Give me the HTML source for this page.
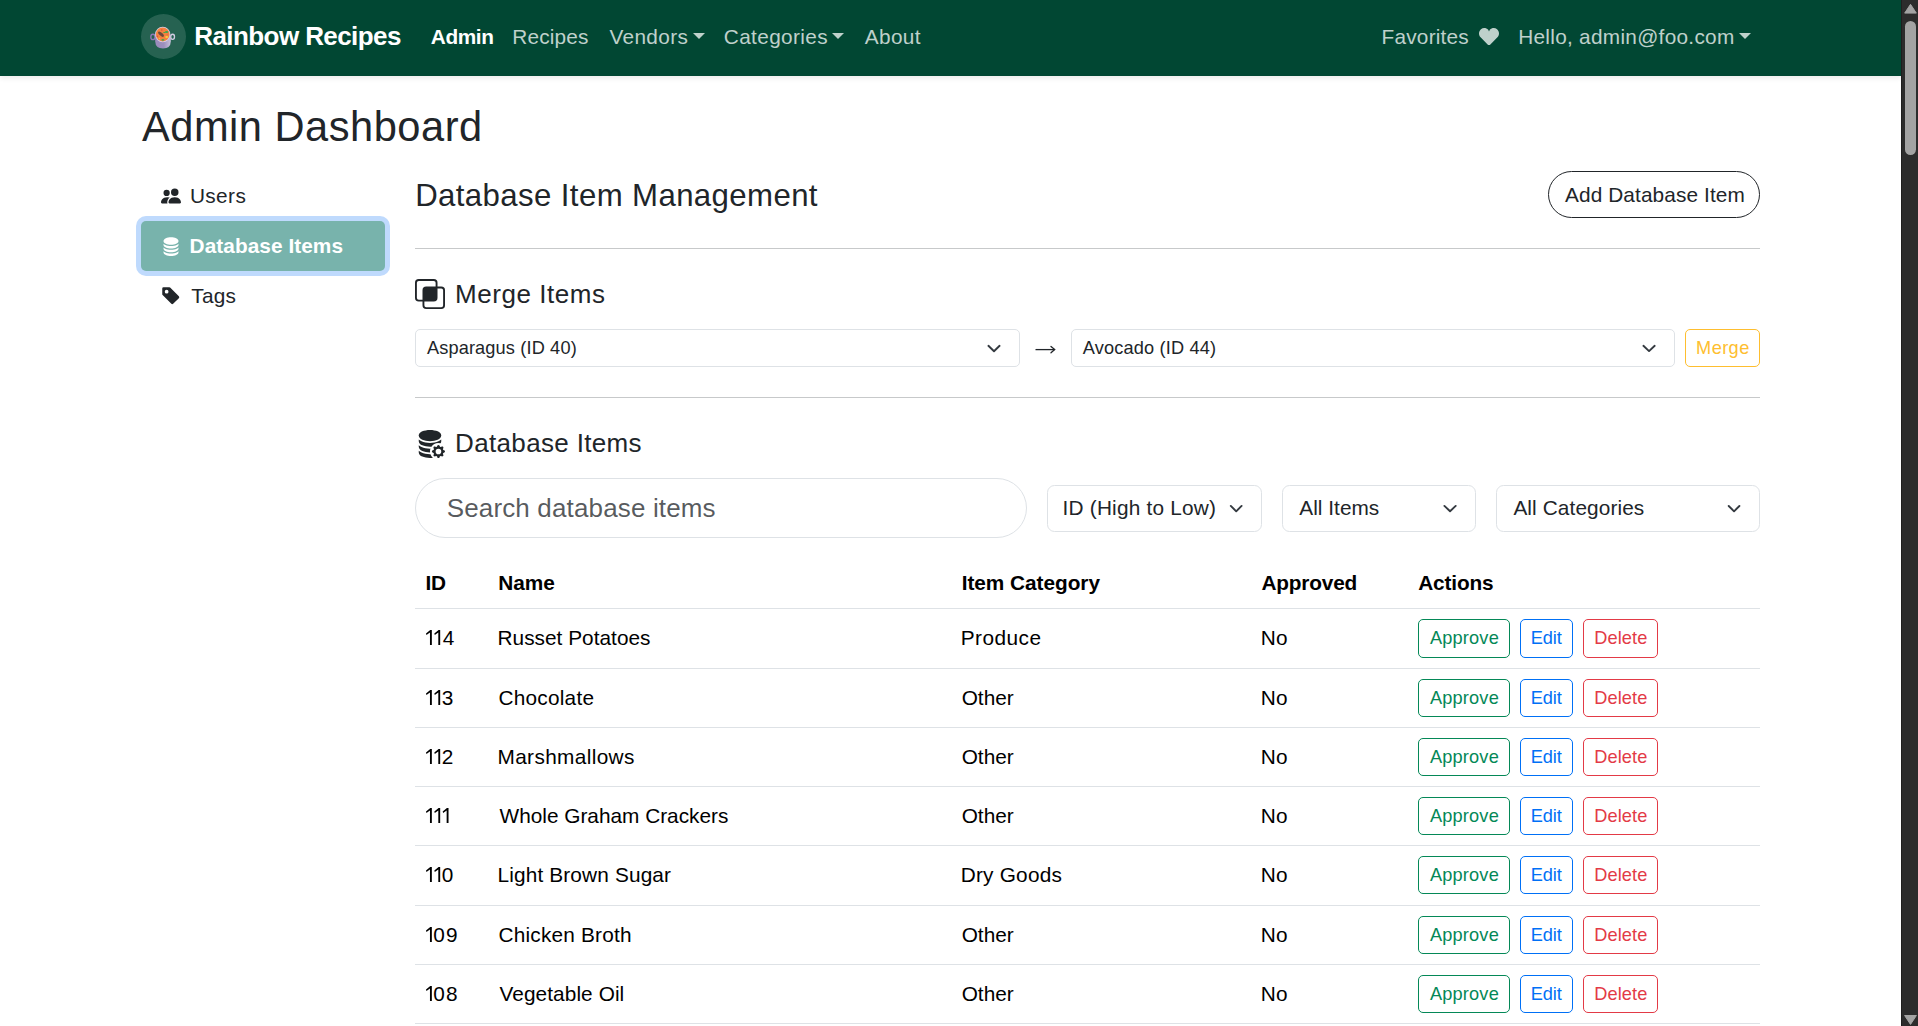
<!DOCTYPE html>
<html><head><meta charset="utf-8"><title>Admin Dashboard - Rainbow Recipes</title>
<style>
html,body{margin:0;padding:0;}
body{width:1918px;height:1026px;overflow:hidden;position:relative;background:#fff;font-family:"Liberation Sans",sans-serif;}
.t{position:absolute;white-space:pre;line-height:1;}
.a{position:absolute;box-sizing:border-box;}
</style></head><body>
<div class="a" style="left:0px;top:0px;width:1901px;height:76px;background:#014733;box-shadow:0 2.5px 5px rgba(0,0,0,.075)"></div>
<div class="a" style="left:141px;top:14px;width:45px;height:45px;border-radius:50%;background:rgba(255,255,255,.15)"></div>
<svg class="a" style="left:141px;top:14px" width="45" height="45" viewBox="0 0 45 45">
<defs><linearGradient id="pg" x1="0" x2="1" y1="0" y2="0"><stop offset="0" stop-color="#9a8abb"/><stop offset=".55" stop-color="#9c8fbd"/><stop offset="1" stop-color="#c9c1da"/></linearGradient></defs>
<ellipse cx="11.9" cy="22.9" rx="2.1" ry="2.7" fill="none" stroke="#8f79b6" stroke-width="1.35"/>
<ellipse cx="31.6" cy="22.8" rx="1.9" ry="2.6" fill="none" stroke="#d3cce3" stroke-width="1.35"/>
<path d="M14.2 21 L14.2 27.5 Q14.5 34.5 22 34.5 Q29.6 34.5 29.8 27.5 L29.8 21 Z" fill="url(#pg)"/>
<ellipse cx="21.7" cy="20.5" rx="7.6" ry="7.8" fill="#d6d0e6"/>
<ellipse cx="21.7" cy="20.4" rx="6.8" ry="7.0" fill="#f4813f"/>
<ellipse cx="20.0" cy="20.2" rx="3.6" ry="1.55" transform="rotate(42 20.0 20.2)" fill="#6e4a3a"/>
<ellipse cx="25.6" cy="18.0" rx="1.7" ry="1.1" fill="#3fa84e"/><ellipse cx="23.3" cy="18.4" rx="1.2" ry=".5" fill="#3fa84e"/>
<ellipse cx="21.9" cy="25.8" rx="1.5" ry="0.9" fill="#3fa84e"/>
<ellipse cx="25.7" cy="23.0" rx="1.5" ry="0.95" fill="#f7d33b"/><circle cx="18.5" cy="24.5" r="0.75" fill="#f2c23a"/>
<circle cx="20.8" cy="16.0" r="0.8" fill="#e0503a"/><circle cx="16.4" cy="22.2" r="0.7" fill="#e0503a"/><circle cx="26.3" cy="20.5" r="0.85" fill="#ee6a45"/>
</svg>
<div class="a" style="left:693.1px;top:32.8px;width:0;height:0;border-left:6px solid transparent;border-right:6px solid transparent;border-top:6px solid rgba(255,255,255,.75)"></div>
<div class="a" style="left:831.8px;top:32.8px;width:0;height:0;border-left:6px solid transparent;border-right:6px solid transparent;border-top:6px solid rgba(255,255,255,.75)"></div>
<div class="a" style="left:1739.4px;top:32.8px;width:0;height:0;border-left:6px solid transparent;border-right:6px solid transparent;border-top:6px solid rgba(255,255,255,.75)"></div>
<svg class="a" style="left:1479px;top:28px" width="20" height="17.4" viewBox="0 30 512 450" preserveAspectRatio="none"><path fill="rgba(255,255,255,.75)" d="M462.3 62.6C407.5 15.9 326 24.3 275.7 76.2L256 122L236.3 76.2C186.1 24.3 104.5 15.9 49.7 62.6c-62.8 53.6-66.1 149.8-9.9 207.9l193.5 199.8c12.5 12.9 32.8 12.9 45.3 0l193.5-199.8c56.3-58.1 53-154.3-9.8-207.9z"/></svg>
<div class="a" style="left:136px;top:216px;width:254px;height:60px;border-radius:10px;background:#bfdafd"></div>
<div class="a" style="left:141px;top:221px;width:244px;height:50px;border-radius:5px;background:#78b3ac"></div>
<svg class="a" style="left:161px;top:185.7px" width="20" height="20" viewBox="0 0 16 16"><path fill="#212529" d="M7 14s-1 0-1-1 1-4 5-4 5 3 5 4-1 1-1 1zm4-6a3 3 0 1 0 0-6 3 3 0 0 0 0 6m-5.784 6A2.24 2.24 0 0 1 5 13c0-1.355.68-2.75 1.936-3.72A6.3 6.3 0 0 0 5 9c-4 0-5 3-5 4s1 1 1 1zM4.5 8a2.5 2.5 0 1 0 0-5 2.5 2.5 0 0 0 0 5"/></svg>
<svg class="a" style="left:160.6px;top:235.75px" width="20" height="20" viewBox="0 0 16 16"><g fill="#fff"><path d="M3.904 1.777C4.978 1.289 6.427 1 8 1s3.022.289 4.096.777C13.125 2.245 14 2.993 14 4s-.875 1.755-1.904 2.223C11.022 6.711 9.573 7 8 7s-3.022-.289-4.096-.777C2.875 5.755 2 5.007 2 4s.875-1.755 1.904-2.223"/><path d="M2 6.161V7c0 1.007.875 1.755 1.904 2.223C4.978 9.71 6.427 10 8 10s3.022-.289 4.096-.777C13.125 8.755 14 8.007 14 7v-.839c-.457.432-1.004.751-1.49.972C11.278 7.693 9.682 8 8 8s-3.278-.307-4.51-.867c-.486-.22-1.033-.54-1.49-.972"/><path d="M2 9.161V10c0 1.007.875 1.755 1.904 2.223C4.978 12.711 6.427 13 8 13s3.022-.289 4.096-.777C13.125 11.755 14 11.007 14 10v-.839c-.457.432-1.004.751-1.49.972-1.232.56-2.828.867-4.51.867s-3.278-.307-4.51-.867c-.486-.22-1.033-.54-1.49-.972"/><path d="M2 12.161V13c0 1.007.875 1.755 1.904 2.223C4.978 15.711 6.427 16 8 16s3.022-.289 4.096-.777C13.125 14.755 14 14.007 14 13v-.839c-.457.432-1.004.751-1.49.972-1.232.56-2.828.867-4.51.867s-3.278-.307-4.51-.867c-.486-.22-1.033-.54-1.49-.972"/></g></svg>
<svg class="a" style="left:160.75px;top:285.75px" width="20" height="20" viewBox="0 0 16 16"><path fill="#212529" d="M2 1a1 1 0 0 0-1 1v4.586a1 1 0 0 0 .293.707l7 7a1 1 0 0 0 1.414 0l4.586-4.586a1 1 0 0 0 0-1.414l-7-7A1 1 0 0 0 6.586 1zm4 3.5a1.5 1.5 0 1 1-3 0 1.5 1.5 0 0 1 3 0"/></svg>
<div class="a" style="left:1548px;top:171px;width:212px;height:47px;border:1px solid #212529;border-radius:23.5px"></div>
<div class="a" style="left:415px;top:248px;width:1345px;height:1px;background:#c7c9ca"></div>
<svg class="a" style="left:415px;top:279px" width="30" height="30" viewBox="0 0 16 16"><path fill="#212529" d="M0 2a2 2 0 0 1 2-2h8a2 2 0 0 1 2 2v2h2a2 2 0 0 1 2 2v8a2 2 0 0 1-2 2H6a2 2 0 0 1-2-2v-2H2a2 2 0 0 1-2-2zm5 10v2a1 1 0 0 0 1 1h8a1 1 0 0 0 1-1V6a1 1 0 0 0-1-1h-2v5a2 2 0 0 1-2 2zm6-8V2a1 1 0 0 0-1-1H2a1 1 0 0 0-1 1v8a1 1 0 0 0 1 1h2V6a2 2 0 0 1 2-2z"/></svg>
<div class="a" style="left:415px;top:329px;width:605px;height:38px;border:1px solid #dee2e6;border-radius:5px"></div>
<div class="a" style="left:1071px;top:329px;width:604px;height:38px;border:1px solid #dee2e6;border-radius:5px"></div>
<div class="a" style="left:1685px;top:329px;width:75px;height:38px;border:1px solid #febe2f;border-radius:5px"></div>
<svg class="a" style="left:1030px;top:340px" width="30" height="20" viewBox="0 0 30 20"><path d="M5.5 9.6 H24.6" stroke="#212529" stroke-width="1.3" fill="none"/><path d="M21.0 6.5 L24.7 9.6 L21.0 12.8" stroke="#212529" stroke-width="1.3" fill="none" stroke-linejoin="miter" stroke-linecap="round"/></svg>
<div class="a" style="left:415px;top:397px;width:1345px;height:1px;background:#c7c9ca"></div>
<svg class="a" style="left:415.2px;top:427.9px" width="30" height="30" viewBox="0 0 16 16"><g fill="#212529"><path d="M8 1c-1.573 0-3.022.289-4.096.777C2.875 2.245 2 2.993 2 4s.875 1.755 1.904 2.223C4.978 6.711 6.427 7 8 7s3.022-.289 4.096-.777C13.125 5.755 14 5.007 14 4s-.875-1.755-1.904-2.223C11.022 1.289 9.573 1 8 1"/><path d="M2 7v-.839c.457.432 1.004.751 1.49.972C4.722 7.693 6.318 8 8 8s3.278-.307 4.51-.867c.486-.22 1.033-.54 1.49-.972V7c0 .424-.155.802-.411 1.133a4.51 4.51 0 0 0-4.815 1.843A12 12 0 0 1 8 10c-1.573 0-3.022-.289-4.096-.777C2.875 8.755 2 8.007 2 7m6.257 3.998L8 11c-1.682 0-3.278-.307-4.51-.867-.486-.22-1.033-.54-1.49-.972V10c0 1.007.875 1.755 1.904 2.223C4.978 12.711 6.427 13 8 13h.027a4.55 4.55 0 0 1 .23-2.002m-.002 3L8 14c-1.682 0-3.278-.307-4.51-.867-.486-.22-1.033-.54-1.49-.972V13c0 1.007.875 1.755 1.904 2.223C4.978 15.711 6.427 16 8 16c.536 0 1.058-.034 1.555-.097a4.5 4.5 0 0 1-1.3-1.905"/><path d="M11.886 9.46c.18-.613 1.048-.613 1.229 0l.043.148a.64.64 0 0 0 .921.382l.136-.074c.561-.306 1.175.308.87.869l-.075.136a.64.64 0 0 0 .382.92l.149.045c.612.18.612 1.048 0 1.229l-.15.043a.64.64 0 0 0-.38.921l.074.136c.305.561-.309 1.175-.87.87l-.136-.075a.64.64 0 0 0-.92.382l-.045.149c-.18.612-1.048.612-1.229 0l-.043-.15a.64.64 0 0 0-.921-.38l-.136.074c-.561.305-1.175-.309-.87-.87l.075-.136a.64.64 0 0 0-.382-.92l-.148-.045c-.613-.18-.613-1.048 0-1.229l.148-.043a.64.64 0 0 0 .382-.921l-.074-.136c-.306-.561.308-1.175.869-.87l.136.075a.64.64 0 0 0 .92-.382zM14 12.5a1.5 1.5 0 1 0-3 0 1.5 1.5 0 0 0 3 0"/></g></svg>
<div class="a" style="left:415px;top:478px;width:612px;height:60px;border:1px solid #dee2e6;border-radius:30px"></div>
<div class="a" style="left:1047px;top:485px;width:215px;height:47px;border:1px solid #dee2e6;border-radius:7.5px"></div>
<div class="a" style="left:1282px;top:485px;width:194px;height:47px;border:1px solid #dee2e6;border-radius:7.5px"></div>
<div class="a" style="left:1496px;top:485px;width:264px;height:47px;border:1px solid #dee2e6;border-radius:7.5px"></div>
<svg class="a" style="left:0;top:0" width="1918" height="1026"><g fill="none" stroke="#343a40" stroke-width="1.9" stroke-linecap="round" stroke-linejoin="round"><path d="M988.4 345.8 L994.0 351.2 L999.6 345.8"/><path d="M1643.4 345.8 L1649.0500000000002 351.1 L1654.7 345.8"/><path d="M1230.8 505.9 L1236.1999999999998 511.3 L1241.6 505.9"/><path d="M1444.4 505.9 L1450.0500000000002 511.2 L1455.7 505.9"/><path d="M1728.7 506 L1734.0500000000002 511.3 L1739.4 506"/></g></svg>
<div class="a" style="left:415px;top:608px;width:1345px;height:1px;background:#dee2e6"></div>
<div class="a" style="left:415px;top:668px;width:1345px;height:1px;background:#dee2e6"></div>
<div class="a" style="left:415px;top:727px;width:1345px;height:1px;background:#dee2e6"></div>
<div class="a" style="left:415px;top:786px;width:1345px;height:1px;background:#dee2e6"></div>
<div class="a" style="left:415px;top:845px;width:1345px;height:1px;background:#dee2e6"></div>
<div class="a" style="left:415px;top:905px;width:1345px;height:1px;background:#dee2e6"></div>
<div class="a" style="left:415px;top:964px;width:1345px;height:1px;background:#dee2e6"></div>
<div class="a" style="left:415px;top:1023px;width:1345px;height:1px;background:#dee2e6"></div>
<div class="a" style="left:1418px;top:619px;width:92px;height:39px;border:1px solid #048857;border-radius:5px"></div>
<div class="a" style="left:1520px;top:619px;width:53px;height:39px;border:1px solid #0070f6;border-radius:5px"></div>
<div class="a" style="left:1583px;top:619px;width:75px;height:39px;border:1px solid #e33a46;border-radius:5px"></div>
<div class="a" style="left:1418px;top:679px;width:92px;height:38px;border:1px solid #048857;border-radius:5px"></div>
<div class="a" style="left:1520px;top:679px;width:53px;height:38px;border:1px solid #0070f6;border-radius:5px"></div>
<div class="a" style="left:1583px;top:679px;width:75px;height:38px;border:1px solid #e33a46;border-radius:5px"></div>
<div class="a" style="left:1418px;top:738px;width:92px;height:38px;border:1px solid #048857;border-radius:5px"></div>
<div class="a" style="left:1520px;top:738px;width:53px;height:38px;border:1px solid #0070f6;border-radius:5px"></div>
<div class="a" style="left:1583px;top:738px;width:75px;height:38px;border:1px solid #e33a46;border-radius:5px"></div>
<div class="a" style="left:1418px;top:797px;width:92px;height:38px;border:1px solid #048857;border-radius:5px"></div>
<div class="a" style="left:1520px;top:797px;width:53px;height:38px;border:1px solid #0070f6;border-radius:5px"></div>
<div class="a" style="left:1583px;top:797px;width:75px;height:38px;border:1px solid #e33a46;border-radius:5px"></div>
<div class="a" style="left:1418px;top:856px;width:92px;height:38px;border:1px solid #048857;border-radius:5px"></div>
<div class="a" style="left:1520px;top:856px;width:53px;height:38px;border:1px solid #0070f6;border-radius:5px"></div>
<div class="a" style="left:1583px;top:856px;width:75px;height:38px;border:1px solid #e33a46;border-radius:5px"></div>
<div class="a" style="left:1418px;top:916px;width:92px;height:38px;border:1px solid #048857;border-radius:5px"></div>
<div class="a" style="left:1520px;top:916px;width:53px;height:38px;border:1px solid #0070f6;border-radius:5px"></div>
<div class="a" style="left:1583px;top:916px;width:75px;height:38px;border:1px solid #e33a46;border-radius:5px"></div>
<div class="a" style="left:1418px;top:975px;width:92px;height:38px;border:1px solid #048857;border-radius:5px"></div>
<div class="a" style="left:1520px;top:975px;width:53px;height:38px;border:1px solid #0070f6;border-radius:5px"></div>
<div class="a" style="left:1583px;top:975px;width:75px;height:38px;border:1px solid #e33a46;border-radius:5px"></div>
<div class="a" style="left:1901px;top:0px;width:17px;height:1026px;background:#2c2c2c;border-left:1px solid #1f1f1f"></div>
<div class="a" style="left:1905px;top:21px;width:11px;height:134px;background:#a3a3a3;border-radius:5.5px"></div>
<svg class="a" style="left:1901px;top:0" width="17" height="1026"><path d="M9.5 4.3 L15.3 13.1 L3.7 13.1 Z" fill="#a3a3a3" stroke="#a3a3a3" stroke-width="1" stroke-linejoin="round"/><path d="M3.6 1015.5 L15.4 1015.5 L9.5 1024.4 Z" fill="#a3a3a3" stroke="#a3a3a3" stroke-width="1" stroke-linejoin="round"/></svg>
<svg class="a" style="left:0;top:0" width="1918" height="1026"><g fill="#000"><path transform="translate(426.00 645.00)" d="M0 -11.4 L4.25 -14.9 L5.84 -14.9 L5.84 0 L3.97 0 L3.97 -12.5 L0.45 -10.1 Z"/><path transform="translate(434.34 645.00)" d="M0 -11.4 L4.25 -14.9 L5.84 -14.9 L5.84 0 L3.97 0 L3.97 -12.5 L0.45 -10.1 Z"/><path transform="translate(426.00 705.00)" d="M0 -11.4 L4.25 -14.9 L5.84 -14.9 L5.84 0 L3.97 0 L3.97 -12.5 L0.45 -10.1 Z"/><path transform="translate(434.34 705.00)" d="M0 -11.4 L4.25 -14.9 L5.84 -14.9 L5.84 0 L3.97 0 L3.97 -12.5 L0.45 -10.1 Z"/><path transform="translate(426.00 764.00)" d="M0 -11.4 L4.25 -14.9 L5.84 -14.9 L5.84 0 L3.97 0 L3.97 -12.5 L0.45 -10.1 Z"/><path transform="translate(434.34 764.00)" d="M0 -11.4 L4.25 -14.9 L5.84 -14.9 L5.84 0 L3.97 0 L3.97 -12.5 L0.45 -10.1 Z"/><path transform="translate(426.00 823.00)" d="M0 -11.4 L4.25 -14.9 L5.84 -14.9 L5.84 0 L3.97 0 L3.97 -12.5 L0.45 -10.1 Z"/><path transform="translate(434.34 823.00)" d="M0 -11.4 L4.25 -14.9 L5.84 -14.9 L5.84 0 L3.97 0 L3.97 -12.5 L0.45 -10.1 Z"/><path transform="translate(442.68 823.00)" d="M0 -11.4 L4.25 -14.9 L5.84 -14.9 L5.84 0 L3.97 0 L3.97 -12.5 L0.45 -10.1 Z"/><path transform="translate(426.00 882.00)" d="M0 -11.4 L4.25 -14.9 L5.84 -14.9 L5.84 0 L3.97 0 L3.97 -12.5 L0.45 -10.1 Z"/><path transform="translate(434.34 882.00)" d="M0 -11.4 L4.25 -14.9 L5.84 -14.9 L5.84 0 L3.97 0 L3.97 -12.5 L0.45 -10.1 Z"/><path transform="translate(426.00 942.00)" d="M0 -11.4 L4.25 -14.9 L5.84 -14.9 L5.84 0 L3.97 0 L3.97 -12.5 L0.45 -10.1 Z"/><path transform="translate(426.00 1001.00)" d="M0 -11.4 L4.25 -14.9 L5.84 -14.9 L5.84 0 L3.97 0 L3.97 -12.5 L0.45 -10.1 Z"/></g></svg>
<span class="t" style="left:194.30px;top:22.80px;font-size:26.0px;font-weight:700;letter-spacing:-0.586px;color:#fff">Rainbow Recipes</span>
<span class="t" style="left:430.80px;top:27.40px;font-size:20.8px;font-weight:700;letter-spacing:-0.400px;color:#fff">Admin</span>
<span class="t" style="left:512.20px;top:27.40px;font-size:20.8px;letter-spacing:0.200px;color:rgba(255,255,255,.75)">Recipes</span>
<span class="t" style="left:609.40px;top:27.40px;font-size:20.8px;letter-spacing:0.367px;color:rgba(255,255,255,.75)">Vendors</span>
<span class="t" style="left:723.80px;top:27.40px;font-size:20.8px;letter-spacing:0.356px;color:rgba(255,255,255,.75)">Categories</span>
<span class="t" style="left:864.80px;top:27.40px;font-size:20.8px;letter-spacing:0.350px;color:rgba(255,255,255,.75)">About</span>
<span class="t" style="left:1381.60px;top:27.00px;font-size:20.8px;letter-spacing:0.200px;color:rgba(255,255,255,.75)">Favorites</span>
<span class="t" style="left:1518.20px;top:27.00px;font-size:20.8px;letter-spacing:0.284px;color:rgba(255,255,255,.75)">Hello, admin@foo.com</span>
<span class="t" style="left:142.00px;top:106.30px;font-size:41.6px;letter-spacing:0.514px;color:#212529">Admin Dashboard</span>
<span class="t" style="left:189.90px;top:185.80px;font-size:20.8px;letter-spacing:0.400px;color:#212529">Users</span>
<span class="t" style="left:189.60px;top:236.00px;font-size:20.8px;font-weight:700;letter-spacing:0.062px;color:#fff">Database Items</span>
<span class="t" style="left:191.30px;top:286.00px;font-size:20.8px;letter-spacing:0.200px;color:#212529">Tags</span>
<span class="t" style="left:415.20px;top:179.90px;font-size:31.2px;letter-spacing:0.383px;color:#212529">Database Item Management</span>
<span class="t" style="left:1565.00px;top:184.70px;font-size:20.8px;letter-spacing:0.113px;color:#212529">Add Database Item</span>
<span class="t" style="left:455.10px;top:281.20px;font-size:26.0px;letter-spacing:0.540px;color:#212529">Merge Items</span>
<span class="t" style="left:426.90px;top:338.90px;font-size:18.2px;letter-spacing:0.138px;color:#212529">Asparagus (ID 40)</span>
<span class="t" style="left:1082.70px;top:338.80px;font-size:18.2px;letter-spacing:0.171px;color:#212529">Avocado (ID 44)</span>
<span class="t" style="left:1696.10px;top:338.80px;font-size:18.2px;letter-spacing:0.400px;color:#febe2f">Merge</span>
<span class="t" style="left:455.10px;top:429.70px;font-size:26.0px;letter-spacing:0.338px;color:#212529">Database Items</span>
<span class="t" style="left:446.70px;top:494.80px;font-size:26.0px;letter-spacing:0.150px;color:rgba(33,37,41,.75)">Search database items</span>
<span class="t" style="left:1062.60px;top:498.10px;font-size:20.8px;letter-spacing:0.200px;color:#212529">ID (High to Low)</span>
<span class="t" style="left:1299.30px;top:498.00px;font-size:20.8px;letter-spacing:0.025px;color:#212529">All Items</span>
<span class="t" style="left:1513.40px;top:497.80px;font-size:20.8px;letter-spacing:0.108px;color:#212529">All Categories</span>
<span class="t" style="left:425.60px;top:573.10px;font-size:20.8px;font-weight:700;letter-spacing:0.000px;color:#000">I</span>
<span class="t" style="left:431.10px;top:573.10px;font-size:20.8px;font-weight:700;letter-spacing:0.000px;color:#000">D</span>
<span class="t" style="left:498.20px;top:573.10px;font-size:20.8px;font-weight:700;letter-spacing:0.000px;color:#000">Name</span>
<span class="t" style="left:961.70px;top:573.10px;font-size:20.8px;font-weight:700;letter-spacing:-0.033px;color:#000">Item Category</span>
<span class="t" style="left:1261.40px;top:573.10px;font-size:20.8px;font-weight:700;letter-spacing:-0.171px;color:#000">Approved</span>
<span class="t" style="left:1418.20px;top:573.10px;font-size:20.8px;font-weight:700;letter-spacing:-0.133px;color:#000">Actions</span>
<span class="t" style="left:442.68px;top:627.80px;font-size:20.8px;letter-spacing:0.000px;color:#000">4</span>
<span class="t" style="left:497.50px;top:627.80px;font-size:20.8px;letter-spacing:0.029px;color:#000">Russet Potatoes</span>
<span class="t" style="left:960.70px;top:627.80px;font-size:20.8px;letter-spacing:0.467px;color:#000">Produce</span>
<span class="t" style="left:1260.80px;top:627.80px;font-size:20.8px;letter-spacing:0.000px;color:#000">N</span>
<span class="t" style="left:1276.00px;top:627.80px;font-size:20.8px;letter-spacing:0.000px;color:#000">o</span>
<span class="t" style="left:1430.00px;top:629.40px;font-size:18.2px;letter-spacing:0.167px;color:#048857">Approve</span>
<span class="t" style="left:1530.80px;top:629.40px;font-size:18.2px;letter-spacing:-0.133px;color:#0070f6">Edit</span>
<span class="t" style="left:1594.20px;top:629.40px;font-size:18.2px;letter-spacing:0.120px;color:#e33a46">Delete</span>
<span class="t" style="left:441.68px;top:687.80px;font-size:20.8px;letter-spacing:0.000px;color:#000">3</span>
<span class="t" style="left:498.50px;top:687.80px;font-size:20.8px;letter-spacing:0.225px;color:#000">Chocolate</span>
<span class="t" style="left:961.70px;top:687.80px;font-size:20.8px;letter-spacing:0.000px;color:#000">Other</span>
<span class="t" style="left:1260.80px;top:687.80px;font-size:20.8px;letter-spacing:0.000px;color:#000">N</span>
<span class="t" style="left:1276.00px;top:687.80px;font-size:20.8px;letter-spacing:0.000px;color:#000">o</span>
<span class="t" style="left:1430.00px;top:689.40px;font-size:18.2px;letter-spacing:0.167px;color:#048857">Approve</span>
<span class="t" style="left:1530.80px;top:689.40px;font-size:18.2px;letter-spacing:-0.133px;color:#0070f6">Edit</span>
<span class="t" style="left:1594.20px;top:689.40px;font-size:18.2px;letter-spacing:0.120px;color:#e33a46">Delete</span>
<span class="t" style="left:441.68px;top:746.80px;font-size:20.8px;letter-spacing:0.000px;color:#000">2</span>
<span class="t" style="left:497.50px;top:746.80px;font-size:20.8px;letter-spacing:0.364px;color:#000">Marshmallows</span>
<span class="t" style="left:961.70px;top:746.80px;font-size:20.8px;letter-spacing:0.000px;color:#000">Other</span>
<span class="t" style="left:1260.80px;top:746.80px;font-size:20.8px;letter-spacing:0.000px;color:#000">N</span>
<span class="t" style="left:1276.00px;top:746.80px;font-size:20.8px;letter-spacing:0.000px;color:#000">o</span>
<span class="t" style="left:1430.00px;top:748.40px;font-size:18.2px;letter-spacing:0.167px;color:#048857">Approve</span>
<span class="t" style="left:1530.80px;top:748.40px;font-size:18.2px;letter-spacing:-0.133px;color:#0070f6">Edit</span>
<span class="t" style="left:1594.20px;top:748.40px;font-size:18.2px;letter-spacing:0.120px;color:#e33a46">Delete</span>
<span class="t" style="left:499.50px;top:805.80px;font-size:20.8px;letter-spacing:0.000px;color:#000">Whole Graham Crackers</span>
<span class="t" style="left:961.70px;top:805.80px;font-size:20.8px;letter-spacing:0.000px;color:#000">Other</span>
<span class="t" style="left:1260.80px;top:805.80px;font-size:20.8px;letter-spacing:0.000px;color:#000">N</span>
<span class="t" style="left:1276.00px;top:805.80px;font-size:20.8px;letter-spacing:0.000px;color:#000">o</span>
<span class="t" style="left:1430.00px;top:807.40px;font-size:18.2px;letter-spacing:0.167px;color:#048857">Approve</span>
<span class="t" style="left:1530.80px;top:807.40px;font-size:18.2px;letter-spacing:-0.133px;color:#0070f6">Edit</span>
<span class="t" style="left:1594.20px;top:807.40px;font-size:18.2px;letter-spacing:0.120px;color:#e33a46">Delete</span>
<span class="t" style="left:441.68px;top:864.80px;font-size:20.8px;letter-spacing:0.000px;color:#000">0</span>
<span class="t" style="left:497.50px;top:864.80px;font-size:20.8px;letter-spacing:0.150px;color:#000">Light Brown Sugar</span>
<span class="t" style="left:960.70px;top:864.80px;font-size:20.8px;letter-spacing:0.225px;color:#000">Dry Goods</span>
<span class="t" style="left:1260.80px;top:864.80px;font-size:20.8px;letter-spacing:0.000px;color:#000">N</span>
<span class="t" style="left:1276.00px;top:864.80px;font-size:20.8px;letter-spacing:0.000px;color:#000">o</span>
<span class="t" style="left:1430.00px;top:866.40px;font-size:18.2px;letter-spacing:0.167px;color:#048857">Approve</span>
<span class="t" style="left:1530.80px;top:866.40px;font-size:18.2px;letter-spacing:-0.133px;color:#0070f6">Edit</span>
<span class="t" style="left:1594.20px;top:866.40px;font-size:18.2px;letter-spacing:0.120px;color:#e33a46">Delete</span>
<span class="t" style="left:433.34px;top:924.80px;font-size:20.8px;letter-spacing:0.000px;color:#000">0</span>
<span class="t" style="left:446.04px;top:924.80px;font-size:20.8px;letter-spacing:0.000px;color:#000">9</span>
<span class="t" style="left:498.50px;top:924.80px;font-size:20.8px;letter-spacing:0.200px;color:#000">Chicken Broth</span>
<span class="t" style="left:961.70px;top:924.80px;font-size:20.8px;letter-spacing:0.000px;color:#000">Other</span>
<span class="t" style="left:1260.80px;top:924.80px;font-size:20.8px;letter-spacing:0.000px;color:#000">N</span>
<span class="t" style="left:1276.00px;top:924.80px;font-size:20.8px;letter-spacing:0.000px;color:#000">o</span>
<span class="t" style="left:1430.00px;top:926.40px;font-size:18.2px;letter-spacing:0.167px;color:#048857">Approve</span>
<span class="t" style="left:1530.80px;top:926.40px;font-size:18.2px;letter-spacing:-0.133px;color:#0070f6">Edit</span>
<span class="t" style="left:1594.20px;top:926.40px;font-size:18.2px;letter-spacing:0.120px;color:#e33a46">Delete</span>
<span class="t" style="left:433.34px;top:983.80px;font-size:20.8px;letter-spacing:0.000px;color:#000">0</span>
<span class="t" style="left:446.04px;top:983.80px;font-size:20.8px;letter-spacing:0.000px;color:#000">8</span>
<span class="t" style="left:499.50px;top:983.80px;font-size:20.8px;letter-spacing:0.083px;color:#000">Vegetable Oil</span>
<span class="t" style="left:961.70px;top:983.80px;font-size:20.8px;letter-spacing:0.000px;color:#000">Other</span>
<span class="t" style="left:1260.80px;top:983.80px;font-size:20.8px;letter-spacing:0.000px;color:#000">N</span>
<span class="t" style="left:1276.00px;top:983.80px;font-size:20.8px;letter-spacing:0.000px;color:#000">o</span>
<span class="t" style="left:1430.00px;top:985.40px;font-size:18.2px;letter-spacing:0.167px;color:#048857">Approve</span>
<span class="t" style="left:1530.80px;top:985.40px;font-size:18.2px;letter-spacing:-0.133px;color:#0070f6">Edit</span>
<span class="t" style="left:1594.20px;top:985.40px;font-size:18.2px;letter-spacing:0.120px;color:#e33a46">Delete</span>
</body></html>
